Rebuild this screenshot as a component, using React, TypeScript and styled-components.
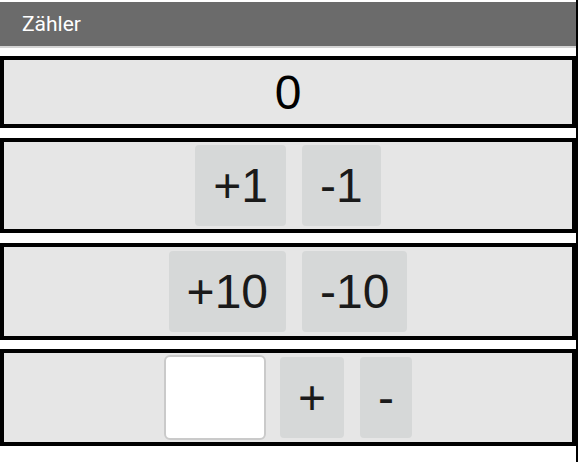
import React, { useState } from "react";
import styled, { createGlobalStyle } from "styled-components";

const Global = createGlobalStyle`
  html, body {
    margin: 0;
    padding: 0;
    background: #ffffff;
  }
  * { box-sizing: border-box; }
`;

const Page = styled.div`
  width: 578px;
  min-height: 100vh;
  padding-top: 2px;
  border-right: 2px solid #000000;
  font-family: "Liberation Sans", Arial, sans-serif;
`;

const TitleBar = styled.header`
  height: 46px;
  background: #6b6b6b;
  border-bottom: 2px solid #d4d4d4;
  display: flex;
  align-items: center;
  padding-left: 22px;
  margin-bottom: 8px;
  color: #ffffff;
  font-family: Roboto, "Noto Sans", sans-serif;
  font-size: 21px;
`;

const Panel = styled.section<{ $pad: number; $gapBelow: number }>`
  border: 4px solid #000000;
  background: #e6e6e6;
  display: flex;
  justify-content: center;
  align-items: center;
  gap: 16px;
  padding: ${(p) => p.$pad}px 0;
  margin-bottom: ${(p) => p.$gapBelow}px;
`;

const Value = styled.div`
  height: 64px;
  display: flex;
  align-items: center;
  font-size: 48px;
  color: #000000;
`;

const StepButton = styled.button`
  font-family: "Liberation Sans", Arial, sans-serif;
  font-size: 48px;
  line-height: 55px;
  padding: 13px 18px;
  border: none;
  border-radius: 4px;
  background: #d6d8d8;
  color: #1a1a1a;
  cursor: pointer;
`;

const AmountInput = styled.input`
  width: 102px;
  height: 85px;
  border: 2px solid #cacaca;
  border-radius: 6px;
  background: #ffffff;
  font-size: 32px;
  text-align: center;
  margin-right: -2px;
  outline: none;
`;

export default function App() {
  const [count, setCount] = useState(0);
  const [amount, setAmount] = useState("");
  const step = () => Number(amount) || 0;

  return (
    <>
      <Global />
      <Page>
        <TitleBar>Zähler</TitleBar>
        <Panel $pad={0} $gapBelow={10}>
          <Value>{count}</Value>
        </Panel>
        <Panel $pad={3} $gapBelow={10}>
          <StepButton onClick={() => setCount((c) => c + 1)}>+1</StepButton>
          <StepButton onClick={() => setCount((c) => c - 1)}>-1</StepButton>
        </Panel>
        <Panel $pad={4} $gapBelow={9}>
          <StepButton onClick={() => setCount((c) => c + 10)}>+10</StepButton>
          <StepButton onClick={() => setCount((c) => c - 10)}>-10</StepButton>
        </Panel>
        <Panel $pad={2} $gapBelow={0}>
          <AmountInput
            value={amount}
            onChange={(e) => setAmount(e.target.value)}
          />
          <StepButton onClick={() => setCount((c) => c + step())}>+</StepButton>
          <StepButton onClick={() => setCount((c) => c - step())}>-</StepButton>
        </Panel>
      </Page>
    </>
  );
}
